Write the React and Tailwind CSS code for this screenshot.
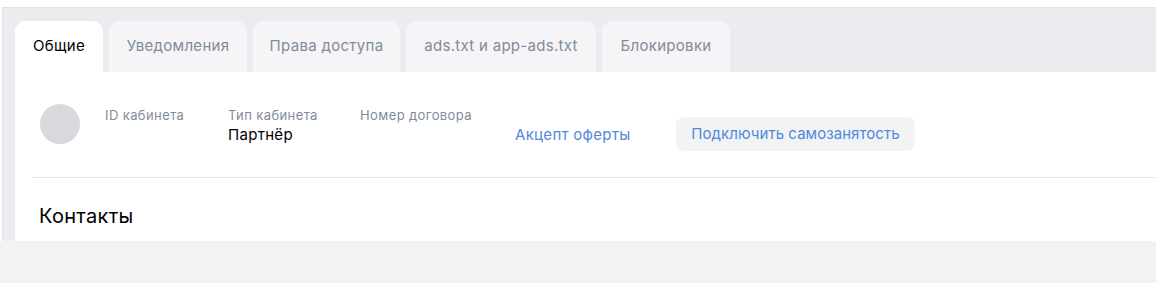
import { useState } from "react";

const tabs = [
  { label: "Общие", w: "w-[88px]" },
  { label: "Уведомления", w: "w-[138px]" },
  { label: "Права доступа", w: "w-[147px]" },
  { label: "ads.txt и app-ads.txt", w: "w-[190px]" },
  { label: "Блокировки", w: "w-[128px]" },
];

export default function App() {
  const [active, setActive] = useState(0);

  return (
    <div
      className="h-[288px] w-full bg-white"
      style={{ fontFamily: "Inter, 'Noto Sans', sans-serif" }}
    >
      <div className="w-[1156px] pt-[7px]">
        {/* settings panel */}
        <div className="ml-[2px] border-t border-l border-[#e1e2e6] bg-[#ebecef] pl-[12px]">
          <div className="flex gap-[6px] pt-[13px]">
            {tabs.map((t, i) => (
              <button
                key={t.label}
                onClick={() => setActive(i)}
                className={`${t.w} flex h-[51px] items-center justify-center rounded-t-[10px] text-[15px] tracking-[0.3px] ${
                  i === active
                    ? "bg-white text-black"
                    : "bg-[#f5f5f7] text-[#818c99]"
                }`}
              >
                {t.label}
              </button>
            ))}
          </div>

          <div className="h-[169px] bg-white">
            <div className="flex items-start pt-[32px] pl-[25px]">
              <div className="h-[40px] w-[40px] shrink-0 rounded-full bg-[#d8d9dc]" />
              <div className="ml-[25px] mt-[3px] w-[123px]">
                <div className="text-[13px] leading-[16px] tracking-[0.4px] text-[#818c99]">ID кабинета</div>
              </div>
              <div className="mt-[3px] w-[132px]">
                <div className="text-[13px] leading-[16px] tracking-[0.4px] text-[#818c99]">Тип кабинета</div>
                <div className="mt-[2px] text-[15px] leading-[20px] tracking-[0.3px] text-black">Партнёр</div>
              </div>
              <div className="mt-[3px] w-[155px]">
                <div className="text-[13px] leading-[16px] tracking-[0.4px] text-[#818c99]">Номер договора</div>
              </div>
              <a className="mt-[21px] w-[161px] text-[15px] leading-[20px] tracking-[0.3px] text-[#4f89db]">
                Акцепт оферты
              </a>
              <button className="mt-[13px] flex h-[34px] w-[239px] items-center justify-center rounded-[8px] bg-[#f2f3f5] text-[15px] tracking-[0.05px] text-[#4f89db]">
                Подключить самозанятость
              </button>
            </div>

            <div className="ml-[17px] mt-[26px] h-px bg-[#e7e8ec]" />

            <h2 className="ml-[24px] mt-[26px] text-[20px] leading-[24px] tracking-[0.3px] text-black">
              Контакты
            </h2>
          </div>
        </div>

        <div className="h-[42px] bg-[#f1f2f4]" />
      </div>
    </div>
  );
}
